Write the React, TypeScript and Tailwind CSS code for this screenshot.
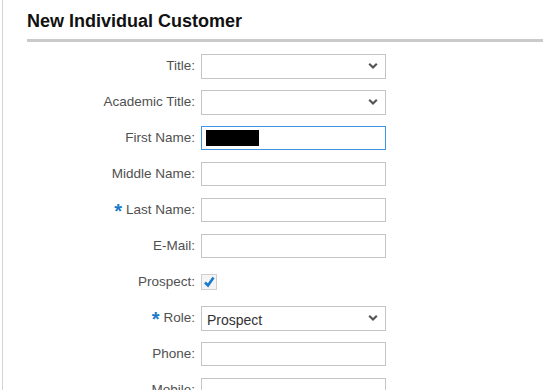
import React from "react";

const Chevron = () => (
  <svg width="10" height="7" viewBox="0 0 10 7" className="absolute right-[7px] top-1/2 -translate-y-1/2">
    <path d="M1.2 1.2 L5 5 L8.8 1.2" fill="none" stroke="#555" strokeWidth="2.2" />
  </svg>
);

const Star = () => (
  <span className="relative top-[1px] mr-[4px] text-[20px] font-bold leading-[10px] text-[#1a7ac9]">*</span>
);

function Row({ label, req, children }: { label: string; req?: boolean; children: React.ReactNode }) {
  return (
    <div className="flex h-[36px] items-center">
      <div className="flex w-[168px] items-center justify-end text-[13.5px] text-[#505050]">
        {req && <Star />}
        <span>{label}:</span>
      </div>
      <div className="ml-[6px]">{children}</div>
    </div>
  );
}

const Input = ({ focused, children }: { focused?: boolean; children?: React.ReactNode }) => (
  <div
    className={`relative h-[24px] w-[185px] border bg-white ${focused ? "border-[#3f95e4]" : "border-[#c4c4c4]"}`}
  >
    {children}
  </div>
);

const Select = ({ value }: { value?: string }) => (
  <div className="relative h-[25px] w-[185px] border border-[#c4c4c4] bg-white">
    {value && <span className="absolute left-[5px] top-[3px] text-[14px] text-[#333]">{value}</span>}
    <Chevron />
  </div>
);

export default function App() {
  return (
    <div className="h-[390px] w-[543px] overflow-hidden bg-white" style={{ fontFamily: "'Liberation Sans', Arial, sans-serif" }}>
      <div className="ml-[2px] h-full border-l border-[#d4d4d4]">
        <div className="pl-[24px]">
          <h1 className="pt-[11px] text-[18px] font-bold leading-[20px] text-[#111]">New Individual Customer</h1>
          <div className="mt-[8px] h-[3px] bg-[#cacaca]" />
          <div className="mt-[6px]">
            <Row label="Title"><Select /></Row>
            <Row label="Academic Title"><Select /></Row>
            <Row label="First Name">
              <Input focused>
                <div className="absolute left-[4px] top-[3px] h-[16px] w-[53px] bg-black" />
              </Input>
            </Row>
            <Row label="Middle Name"><Input /></Row>
            <Row label="Last Name" req><Input /></Row>
            <Row label="E-Mail"><Input /></Row>
            <Row label="Prospect">
              <div className="flex h-[16px] w-[16px] items-center justify-center border border-[#cfcfcf] bg-[#f4f4f4]">
                <svg width="12" height="12" viewBox="0 0 12 12">
                  <path d="M2 6.5 L5 9.5 L10.5 1.5" fill="none" stroke="#1a7ac9" strokeWidth="2.6" />
                </svg>
              </div>
            </Row>
            <Row label="Role" req><Select value="Prospect" /></Row>
            <Row label="Phone"><Input /></Row>
            <Row label="Mobile"><Input /></Row>
          </div>
        </div>
      </div>
    </div>
  );
}
